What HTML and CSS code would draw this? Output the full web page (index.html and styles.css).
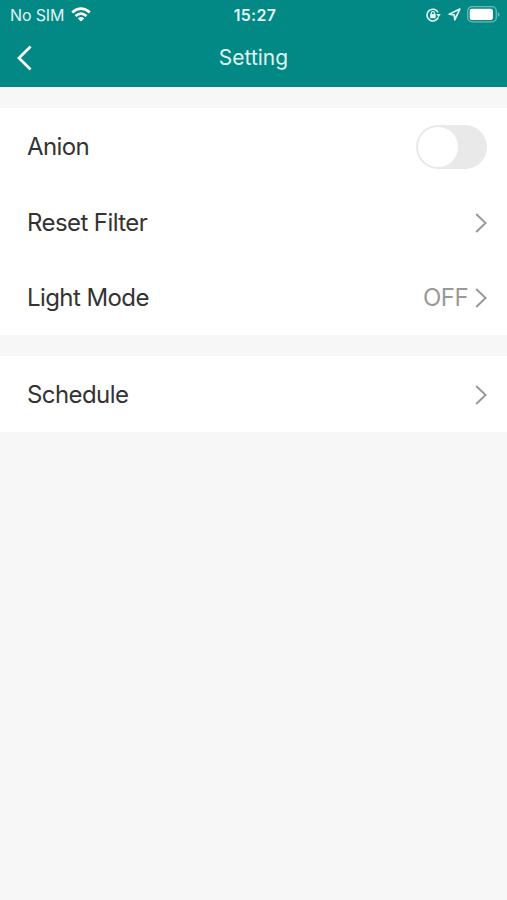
FILE: index.html
```html
<!DOCTYPE html>
<html lang="en">
<head>
<meta charset="utf-8">
<title>Setting</title>
<link rel="stylesheet" href="styles.css">
</head>
<body>
<header class="header">
  <div class="status">
    <div class="status-left">
      <span class="carrier">No SIM</span>
      <svg class="wifi" width="20" height="15" viewBox="0 0 20 15" fill="none" stroke="#fff" stroke-width="2.7"><path d="M1.2 5.5Q10-2.1 18.8 5.5"/><path d="M4.5 9Q10 4.2 15.5 9"/><path d="M10 14.6 6.8 11.4Q10 8.8 13.2 11.4Z" fill="#fff" stroke="none"/></svg>
    </div>
    <span class="time">15:27</span>
    <div class="status-right">
      <svg class="lock" width="15" height="14" viewBox="0 0 15 14" fill="none" stroke="#e0f4f3" stroke-width="1.6"><path d="M12.1 4.4A5.9 5.9 0 1 0 12.3 9.4"/><path d="M10.2 6h4.6l-2.3 3.2Z" fill="#e0f4f3" stroke="none"/><path d="M5.2 6.6V5.4a1.7 1.7 0 0 1 3.4 0v1.2" stroke-width="1.2"/><rect x="4.1" y="6" width="5.6" height="4.2" rx=".6" fill="#e0f4f3" stroke="none"/></svg>
      <svg class="arrow" width="13" height="13" viewBox="0 0 13 13" fill="none" stroke="#e0f4f3" stroke-width="1.7" stroke-linejoin="round"><path d="M11.8 1.1 1.2 6.2l5 .6.6 5Z"/></svg>
      <svg class="battery" width="33" height="17" viewBox="0 0 33 17"><rect x=".7" y=".7" width="28.6" height="15.2" rx="4.4" fill="none" stroke="#6bbbb8" stroke-width="1.3"/><rect x="2.7" y="2.7" width="23.2" height="11.2" rx="2" fill="#fff"/><path d="M30.8 6v5q1.7-.8 1.7-2.5T30.8 6Z" fill="#6bbbb8"/></svg>
    </div>
  </div>
  <div class="navbar">
    <svg class="back" width="16" height="26" viewBox="0 0 16 26" fill="none" stroke="#fff" stroke-width="2.8"><path d="M13.6 1.6 1.9 13l11.7 11.4"/></svg>
    <h1 class="title">Setting</h1>
  </div>
</header>
<main>
  <section class="group">
    <div class="row"><span class="label">Anion</span><span class="toggle"><span class="knob"></span></span></div>
    <div class="row"><span class="label">Reset Filter</span><svg class="chevron" width="12" height="20" viewBox="0 0 12 20"><path d="m1.2 1 9.4 9-9.4 9"/></svg></div>
    <div class="row"><span class="label">Light Mode</span><span class="value">OFF</span><svg class="chevron" width="12" height="20" viewBox="0 0 12 20"><path d="m1.2 1 9.4 9-9.4 9"/></svg></div>
  </section>
  <section class="group">
    <div class="row"><span class="label">Schedule</span><svg class="chevron" width="12" height="20" viewBox="0 0 12 20"><path d="m1.2 1 9.4 9-9.4 9"/></svg></div>
  </section>
</main>
</body>
</html>
```
FILE: styles.css
```css
* { box-sizing: border-box; }
body {
  margin: 0;
  min-height: 900px;
  background: #f7f7f7;
  color: #333;
  font-family: Inter, "Liberation Sans", sans-serif;
}
.header { height: 87px; background: #028885; color: #e0f4f3; }
.status {
  height: 30px;
  padding: 0 7px 0 10px;
  display: grid;
  grid-template-columns: 1fr auto 1fr;
  align-items: center;
}
.status-left { display: flex; align-items: center; gap: 7px; }
.carrier { font-size: 16px; line-height: 30px; letter-spacing: -0.15px; }
.wifi { margin-top: -2px; }
.time { font-size: 16px; font-weight: 600; line-height: 30px; letter-spacing: 0.3px; }
.status-right { display: flex; align-items: center; justify-content: flex-end; margin-top: -1px; }
.arrow { margin: 0 6px 0 7px; }
.navbar {
  height: 56px;
  padding: 0 17px;
  display: grid;
  grid-template-columns: 1fr auto 1fr;
  align-items: center;
}
.title { margin: 0; font-size: 21px; font-weight: 400; line-height: 56px; }
.group { margin-top: 21px; background: #fff; }
.group + .group { margin-top: 20.4px; }
.row {
  height: 75.8px;
  padding: 2px 20px 0 27px;
  display: flex;
  align-items: center;
}
.label { margin-right: auto; font-size: 24px; line-height: 30px; letter-spacing: -0.58px; }
.value { margin-right: 7px; font-size: 24px; line-height: 30px; letter-spacing: -0.58px; color: #999; }
.chevron { fill: none; stroke: #999; stroke-width: 2; }
.toggle {
  width: 71px;
  height: 44px;
  padding: 2px;
  border-radius: 22px;
  background: #e9e9e9;
}
.knob { display: block; width: 40px; height: 40px; border-radius: 50%; background: #fff; }
```
